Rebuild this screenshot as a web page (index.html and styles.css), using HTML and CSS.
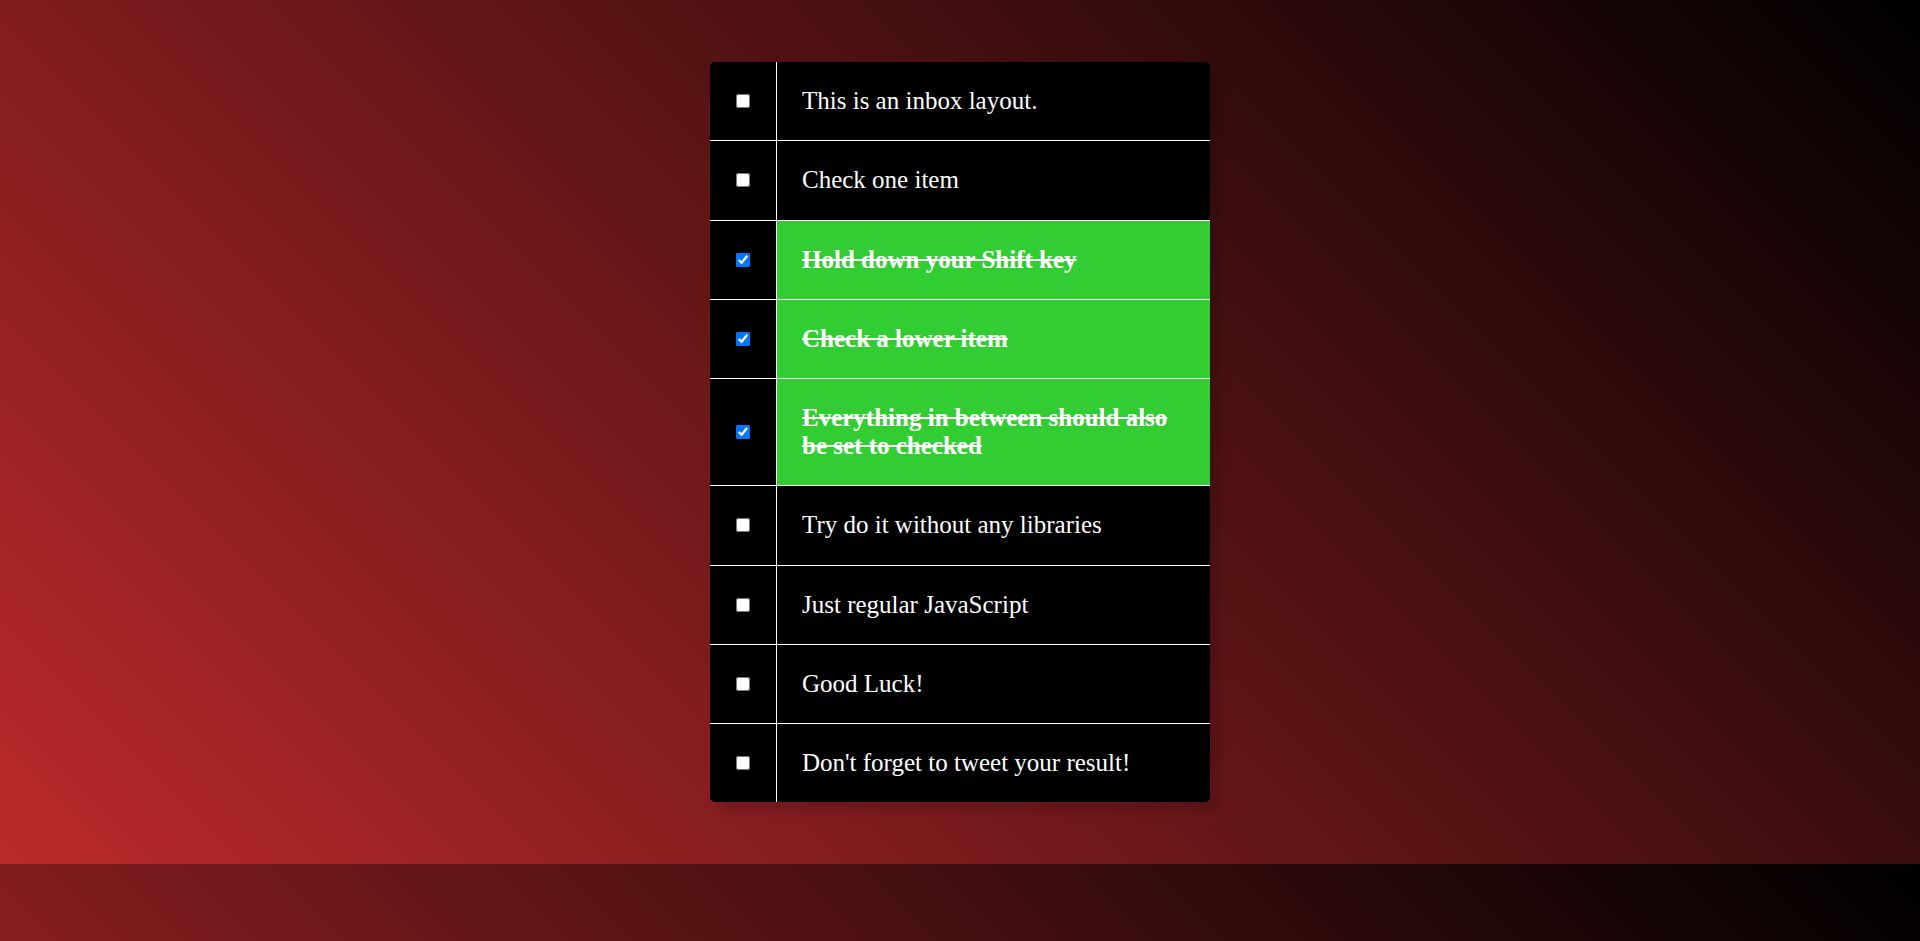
FILE: index.html
```html
<!DOCTYPE html>
<html lang="en">
<head>
<meta charset="UTF-8">
<title>Hold Shift to Check Multiple Checkboxes</title>
<link rel="stylesheet" href="styles.css">
</head>
<body>
  <div class="inbox">
    <div class="item">
      <input type="checkbox">
      <p>This is an inbox layout.</p>
    </div>
    <div class="item">
      <input type="checkbox">
      <p>Check one item</p>
    </div>
    <div class="item">
      <input type="checkbox" checked>
      <p>Hold down your Shift key</p>
    </div>
    <div class="item">
      <input type="checkbox" checked>
      <p>Check a lower item</p>
    </div>
    <div class="item">
      <input type="checkbox" checked>
      <p>Everything in between should also be set to checked</p>
    </div>
    <div class="item">
      <input type="checkbox">
      <p>Try do it without any libraries</p>
    </div>
    <div class="item">
      <input type="checkbox">
      <p>Just regular JavaScript</p>
    </div>
    <div class="item">
      <input type="checkbox">
      <p>Good Luck!</p>
    </div>
    <div class="item">
      <input type="checkbox">
      <p>Don't forget to tweet your result!</p>
    </div>
  </div>
</body>
</html>
```
FILE: styles.css
```css
body {
  margin: 0;
  font-family: "Liberation Serif", "Times New Roman", serif;
  background: linear-gradient(45deg, #bb292b, #000000);
}

.inbox {
  width: 500px;
  margin: 62px auto;
  background: #000;
  border-radius: 5px;
  box-shadow: 10px 10px 8px rgba(0, 0, 0, 0.12);
  overflow: hidden;
}

.item {
  display: flex;
  align-items: center;
  border-bottom: 1px solid #ffffff;
}

.item:last-child {
  border-bottom: 0;
}

.item input[type="checkbox"] {
  width: 14px;
  height: 14px;
  margin: 0 26px 0 26px;
  flex: none;
}

.item p {
  flex: 1;
  margin: 0;
  padding: 25.125px 25px;
  color: #ffffff;
  font-size: 25px;
  line-height: 28px;
  border-left: 1px solid #ffffff;
}

.item input:checked + p {
  background: #32cd32;
  font-weight: bold;
  text-decoration: line-through;
}
```
